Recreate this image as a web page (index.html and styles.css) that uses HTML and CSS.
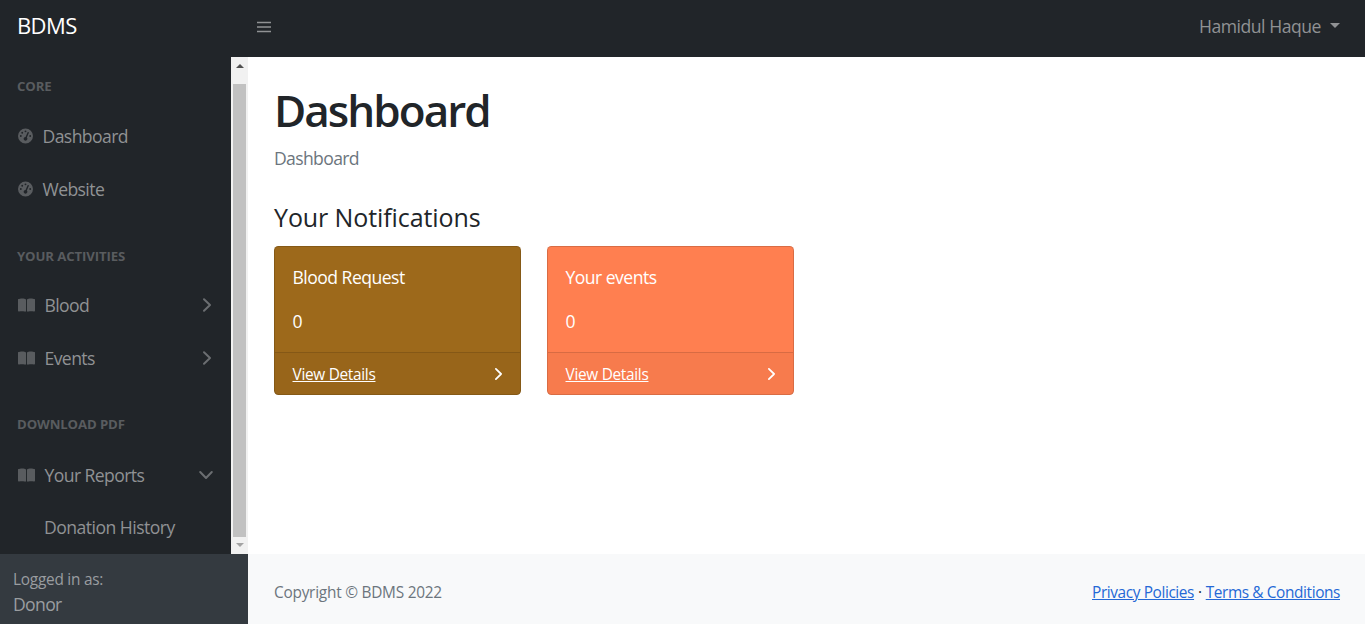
FILE: index.html
```html
<!DOCTYPE html>
<html lang="en">
<head>
<meta charset="utf-8">
<title>Dashboard - BDMS</title>
<link rel="stylesheet" href="styles.css">
</head>
<body>
<svg class="sprite" aria-hidden="true">
  <symbol id="gauge" viewBox="0 0 512 512"><path fill-rule="evenodd" d="M0 256a256 256 0 1 1 512 0a256 256 0 1 1-512 0zM288 96a32 32 0 1 0-64 0a32 32 0 1 0 64 0zM256 416c35 0 64-29 64-64c0-17-7-33-18-45l67-153c5-12 0-26-12-32s-26 0-32 12l-67 154h-2c-35 0-64 28-64 64s29 64 64 64zM176 144a32 32 0 1 0-64 0a32 32 0 1 0 64 0zM96 288a32 32 0 1 0 0-64a32 32 0 1 0 0 64zM448 256a32 32 0 1 0-64 0a32 32 0 1 0 64 0z"/></symbol>
  <symbol id="book" viewBox="0 0 576 512"><path d="M144 32C87 32 39 44 13 56C4 59 0 68 0 77v378c0 16 16 26 31 22c34-10 76-13 113-13c49 0 90 9 112 16c8 3 16-3 16-11V78c0-9-4-16-12-20C240 48 201 32 144 32zM432 32c57 0 105 12 131 24c9 3 13 12 13 21v378c0 16-16 26-31 22c-34-10-76-13-113-13c-49 0-90 9-112 16c-8 3-16-3-16-11V78c0-9 4-16 12-20C336 48 375 32 432 32z"/></symbol>
  <symbol id="chevron" viewBox="0 0 10 16"><path d="M2 2.2L8 8l-6 5.8" fill="none" stroke="currentColor" stroke-width="2" stroke-linecap="round" stroke-linejoin="round"/></symbol>
</svg>
<header class="topnav">
  <a class="brand">BDMS</a>
  <svg class="menu" viewBox="0 0 14 12"><path d="M0 1.5h14M0 6h14M0 10.5h14" stroke="currentColor" stroke-width="1.6"/></svg>
  <a class="user"><span>Hamidul Haque</span><i class="caret"></i></a>
</header>
<div class="layout">
  <aside class="sidebar">
    <div class="scroller">
      <nav class="nav">
        <div class="heading first"><span>Core</span></div>
        <a class="link"><svg class="ico gauge"><use href="#gauge"/></svg><span>Dashboard</span></a>
        <a class="link"><svg class="ico gauge"><use href="#gauge"/></svg><span>Website</span></a>
        <div class="heading mid"><span>Your activities</span></div>
        <a class="link"><svg class="ico book"><use href="#book"/></svg><span>Blood</span><svg class="arrow"><use href="#chevron"/></svg></a>
        <a class="link"><svg class="ico book"><use href="#book"/></svg><span>Events</span><svg class="arrow"><use href="#chevron"/></svg></a>
        <div class="heading"><span>Download PDF</span></div>
        <a class="link"><svg class="ico book"><use href="#book"/></svg><span>Your Reports</span><svg class="arrow open"><use href="#chevron"/></svg></a>
        <a class="link nested"><span>Donation History</span></a>
      </nav>
      <div class="scrollbar"><i class="up"></i><div class="thumb"></div><i class="down"></i></div>
    </div>
    <div class="account"><div class="small">Logged in as:</div><div>Donor</div></div>
  </aside>
  <div class="content">
    <main>
      <h1><span>Dashboard</span></h1>
      <div class="crumb"><span>Dashboard</span></div>
      <h3><span>Your Notifications</span></h3>
      <div class="cards">
        <section class="card brown">
          <div class="body"><div>Blood Request</div><div>0</div></div>
          <div class="foot"><a>View Details</a><svg class="go"><use href="#chevron"/></svg></div>
        </section>
        <section class="card coral">
          <div class="body"><div>Your events</div><div>0</div></div>
          <div class="foot"><a>View Details</a><svg class="go"><use href="#chevron"/></svg></div>
        </section>
      </div>
    </main>
    <footer><span class="copy">Copyright © BDMS 2022</span><div class="legal"><a>Privacy Policies</a><b>·</b><a>Terms &amp; Conditions</a></div></footer>
  </div>
</div>
</body>
</html>
```
FILE: styles.css
```css
* { box-sizing: border-box; }
body { margin: 0; height: 624px; overflow: hidden; display: flex; flex-direction: column; background: #fff; color: #212529; font: 17.6px/26.4px "Open Sans", "Noto Sans", sans-serif; letter-spacing: -.65px; }
.sprite { display: none; }
span, a { white-space: nowrap; }
.topnav { height: 57px; flex: none; display: flex; align-items: center; padding: 0 25px 4px 17px; background: #212529; color: #909294; }
.brand { width: 240px; padding-bottom: 2px; color: #fff; font-size: 22px; letter-spacing: -.6px; }
.menu { width: 14px; height: 12px; }
.user { margin-left: auto; display: flex; align-items: center; gap: 9px; letter-spacing: -.47px; }
.caret { border: 5.5px solid transparent; border-top-color: currentColor; border-bottom: 0; margin-top: -3px; }
.layout { flex: 1; display: flex; min-height: 0; }
.sidebar { width: 248px; display: flex; flex-direction: column; background: #212529; color: #909294; }
.scroller { height: 497px; display: flex; }
.nav { width: 231px; padding-top: 20px; overflow: hidden; }
.heading { height: 63.8px; padding: 30.8px 17px 13.2px; font-size: 13.2px; line-height: 19.8px; font-weight: 700; text-transform: uppercase; color: #595c5f; letter-spacing: -.12px; }
.heading.first { height: 32.6px; padding-top: 0; }
.heading.mid { padding-top: 31.8px; padding-bottom: 12.2px; }
.link { height: 52.8px; display: flex; align-items: center; padding: 0 17px 0 18px; letter-spacing: -.6px; }
.nested { padding-left: 44px; letter-spacing: -.53px; }
.ico { fill: #595c5f; flex: none; }
.gauge { width: 15px; height: 16px; margin-right: 9.5px; }
.book { width: 17px; height: 16px; margin-right: 9.5px; }
.arrow { width: 10px; height: 16px; margin-left: auto; margin-right: 2px; color: #6b6e71; }
.arrow.open { transform: rotate(90deg); margin-right: 3px; }
.link.nested { padding-left: 44px; }
.scrollbar { width: 17px; background: #f1f1f1; display: flex; flex-direction: column; align-items: center; padding: 7px 0; }
.up { border: 4px solid transparent; border-bottom-color: #505050; border-top: 0; }
.down { border: 4px solid transparent; border-top-color: #a3a3a3; border-bottom: 0; }
.thumb { width: 13px; height: 453px; margin: 16px 0 6px; background: #c1c1c1; }
.account { flex: 1; background: #343a40; padding: 13px 13px 0; color: #9a9da0; line-height: 22px; }
.small { font-size: 15.4px; letter-spacing: -.25px; line-height: 26px; }
.content { flex: 1; display: flex; flex-direction: column; }
main { height: 497px; padding: 27px 26px 0; }
h1 { margin: 0; font-size: 44px; line-height: 52px; font-weight: 600; letter-spacing: -1.95px; }
.crumb { margin-top: 9px; color: #6c757d; }
h3 { margin: 30px 0 12px; font-size: 25px; line-height: 33px; font-weight: 400; letter-spacing: -.1px; }
.cards { display: flex; gap: 26px; }
.card { width: 247px; height: 149px; border: 1px solid rgba(0,0,0,.15); border-radius: 4.4px; color: #fff; display: flex; flex-direction: column; }
.brown { background: #9d691b; }
.coral { background: #ff7f50; }
.body { flex: 1; padding: 16.6px 17.5px 0; display: flex; flex-direction: column; gap: 17.6px; letter-spacing: -.54px; }
.foot { height: 42px; flex: none; border-top: 1px solid rgba(0,0,0,.125); background: rgba(0,0,0,.03); display: flex; align-items: center; justify-content: space-between; padding: 1px 17.5px 0; font-size: 15.4px; letter-spacing: -.3px; }
.foot a { padding-top: 1px; }
.foot a, .legal a { text-decoration: underline; }
.go { width: 9px; height: 14px; }
footer { flex: 1; background: #f8f9fa; padding: 8px 25px 0 26px; display: flex; align-items: center; justify-content: space-between; font-size: 15.4px; letter-spacing: -.24px; color: #6c757d; }
.legal { display: flex; gap: 4px; letter-spacing: -.39px; }
.legal a { color: #2468d6; }
.legal b { font-weight: 400; color: #212529; }
```
